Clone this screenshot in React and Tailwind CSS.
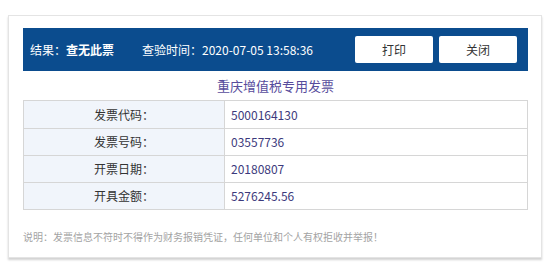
export default function App() {
  const rows = [
    ["发票代码：", "5000164130"],
    ["发票号码：", "03557736"],
    ["开票日期：", "20180807"],
    ["开具金额：", "5276245.56"],
  ];

  return (
    <div
      className="w-[550px] h-[274px] bg-white pt-[15px] pl-[8px]"
      style={{ fontFamily: '"Noto Sans CJK SC", "Noto Sans", sans-serif' }}
    >
      <div className="w-[534px] h-[243px] bg-white border border-[#e4e4e4] shadow-[0_2px_2px_rgba(0,0,0,0.18)] pl-[14px] pr-[13px] pt-[12px]">
        {/* header bar */}
        <div className="h-[43px] bg-[#0b4c8e] flex items-center pl-[7px] pr-[11px] text-white text-[12px]">
          <span>结果：</span>
          <span className="font-bold">查无此票</span>
          <span className="ml-[28px]">查验时间：2020-07-05 13:58:36</span>
          <div className="ml-auto flex gap-[6px]">
            <button className="w-[78px] h-[27px] bg-white text-[#333] text-[12px] rounded-[2px]">打印</button>
            <button className="w-[78px] h-[27px] bg-white text-[#333] text-[12px] rounded-[2px]">关闭</button>
          </div>
        </div>

        {/* title */}
        <div className="h-[29px] flex items-center justify-center text-[13px] text-[#574c9c]">
          重庆增值税专用发票
        </div>

        {/* table */}
        <div className="border border-[#d6d6d6]">
          {rows.map(([k, v], i) => (
            <div key={k} className={"flex h-[27px] text-[12px] " + (i > 0 ? "border-t border-[#d6d6d6]" : "")}>
              <div className="w-[201px] bg-[#f1f5fb] border-r border-[#d6d6d6] flex items-center justify-center text-[#333]">
                {k}
              </div>
              <div className="flex-1 flex items-center pl-[6px] text-[#3c3a7c]">{v}</div>
            </div>
          ))}
        </div>

        {/* note */}
        <div className="mt-[19px] text-[10px] text-[#a3a3a3]">
          说明：发票信息不符时不得作为财务报销凭证，任何单位和个人有权拒收并举报！
        </div>
      </div>
    </div>
  );
}
